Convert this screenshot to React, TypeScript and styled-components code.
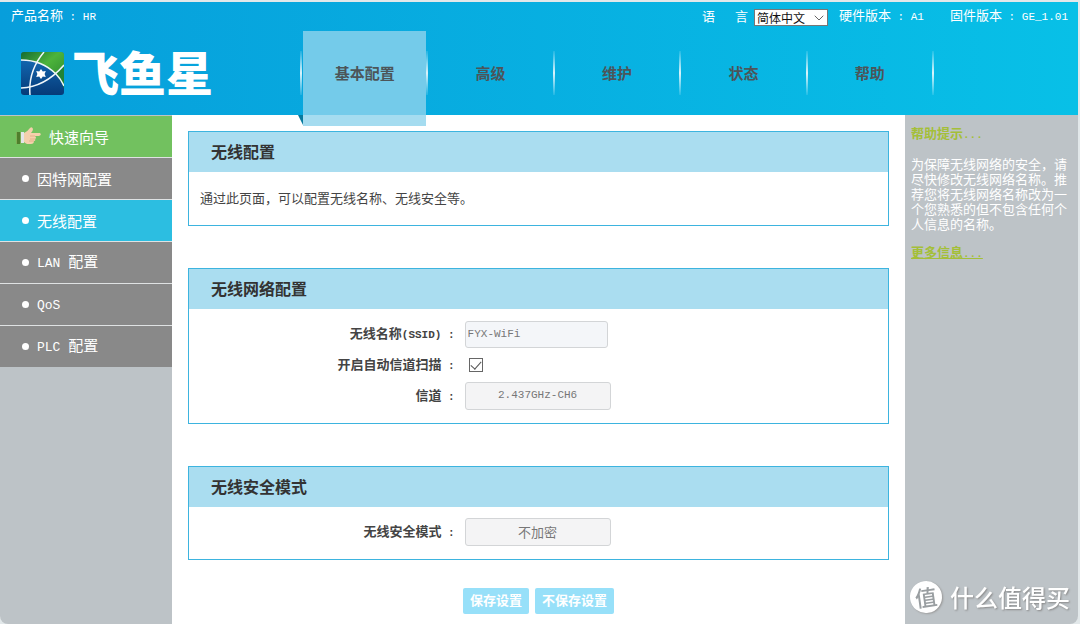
import React from "react";
import styled, { createGlobalStyle, css } from "styled-components";
import { ChevronDown } from "lucide-react";

const GlobalStyle = createGlobalStyle`
  * { box-sizing: border-box; }
  body {
    margin: 0;
    background: #e2e8ea;
    color: #444;
    font-family: "Noto Sans CJK SC", sans-serif;
    font-size: 13px;
    line-height: 15px;
  }
  h2, p, ul { margin: 0; padding: 0; }
  ul { list-style: none; }
  a { color: inherit; text-decoration: none; }
`;

const Page = styled.div`
  display: flex;
  flex-direction: column;
  min-height: 100vh;
  padding: 2px 2px 0 0;
`;

const Header = styled.header`
  position: relative;
  z-index: 1;
  display: flex;
  flex-direction: column;
  background: linear-gradient(to right, #079edb, #08c0e7);
`;

const TopBar = styled.div`
  display: flex;
  align-items: center;
  height: 29px;
  padding: 0 10px 2px 11px;
  color: #fff;
`;

const LanguageLabel = styled.label`
  display: flex;
  gap: 20px;
  margin-left: auto;
  margin-right: 6px;
`;

const SelectWrap = styled.span`
  position: relative;
  display: flex;
  margin-top: 4px;
  margin-right: 11px;
  color: #666;

  svg {
    position: absolute;
    right: 1px;
    top: 1px;
    pointer-events: none;
  }
`;

const LanguageSelect = styled.select`
  appearance: none;
  width: 74px;
  height: 17px;
  padding: 0 0 0 2px;
  border: 1px solid #777;
  border-radius: 0;
  background: #fff;
  color: #111;
  font: 12px/15px "Noto Sans CJK SC", sans-serif;
`;

const Version = styled.span`
  & + & { margin-left: 26px; }
`;

const Latin = styled.span<{ $large?: boolean }>`
  font-family: "Liberation Mono", monospace;
  font-size: ${(p) => (p.$large ? 13 : 11)}px;
  white-space: pre;
`;

const Banner = styled.div`
  display: flex;
  height: 84px;
`;

const Logo = styled.a`
  display: flex;
  align-items: center;
  flex: 0 0 300px;
  gap: 8px;
  padding-left: 21px;
`;

const LogoName = styled.span`
  padding-bottom: 4px;
  color: #fff;
  font-size: 47px;
  font-weight: 900;
  line-height: 48px;
`;

const rule = css`
  content: "";
  width: 2px;
  height: 44px;
  background: linear-gradient(rgba(255, 255, 255, 0.1), rgba(255, 255, 255, 0.85), rgba(255, 255, 255, 0.1));
`;

const Nav = styled.nav`
  display: flex;
  flex: 1;
  align-items: center;
  margin-right: 144px;

  &::before { ${rule} }
`;

const NavItem = styled.div`
  display: flex;
  flex: 1;
  align-items: center;
  align-self: stretch;

  &::after { ${rule} }
`;

const NavLink = styled.a<{ $active?: boolean }>`
  position: relative;
  flex: 1;
  align-self: stretch;
  color: #4c5559;
  font-size: 15px;
  font-weight: bold;
  line-height: 84px;
  text-align: center;

  ${(p) =>
    p.$active &&
    css`
      margin: 0 0 -11px 1px;
      background: linear-gradient(#74cbea 84px, #a5dcf0 84px);

      &::before {
        content: "";
        position: absolute;
        left: -5px;
        bottom: 1px;
        border-top: 10px solid #067a9e;
        border-left: 5px solid transparent;
      }
    `}
`;

const Body = styled.div`
  display: flex;
  flex: 1;
  background: #fff;
  border-radius: 0 0 10px 10px;
`;

const Sidebar = styled.aside`
  flex: 0 0 172px;
  padding-top: 1px;
  background: #bdc3c7;
  border-bottom-left-radius: 8px;
`;

const Menu = styled.ul`
  display: flex;
  flex-direction: column;
  gap: 1px;
  background: #dfe2e3;
`;

const tones = { wizard: "#72c15f", normal: "#898989", active: "#2cbee1" };

const MenuLink = styled.a<{ $tone: keyof typeof tones }>`
  display: flex;
  align-items: center;
  gap: 8px;
  height: 41px;
  padding-bottom: 1px;
  padding-left: ${(p) => (p.$tone === "wizard" ? 16 : 22)}px;
  background: ${(p) => tones[p.$tone]};
  color: #fff;
  font-size: 15px;
`;

const Dot = styled.span`
  width: 7px;
  height: 7px;
  border-radius: 50%;
  background: #fff;
`;

const Main = styled.main`
  display: flex;
  flex: 1;
  flex-direction: column;
  padding: 16px 16px 10px;
`;

const Panel = styled.section`
  margin-bottom: 42px;
  border: 1px solid #3db4df;

  &:last-of-type { margin-bottom: 28px; }
`;

const PanelTitle = styled.h2`
  padding: 0 22px 2px;
  background: #aaddf0;
  color: #333;
  font-size: 16px;
  line-height: 38px;
`;

const Description = styled.p`
  padding: 18px 11px 20px;
`;

const Fields = styled.div`
  display: flex;
  flex-direction: column;
  gap: 3px;
  padding: 11px 0 13px;
`;

const Row = styled.div`
  display: grid;
  grid-template-columns: 38% 1fr;
  align-items: center;
  column-gap: 10px;
  min-height: 28px;
`;

const RowLabel = styled.label`
  color: #444;
  font-weight: bold;
  text-align: right;
`;

const control = css`
  border: 1px solid #d3d5d7;
  border-radius: 3px;
  color: #777;
`;

const TextInput = styled.input`
  ${control}
  width: 143px;
  height: 27px;
  padding: 0 2px;
  background: #f4f6f9;
  font: 11px "Liberation Mono", monospace;
`;

const Dropdown = styled.select<{ $latin?: boolean }>`
  ${control}
  appearance: none;
  width: 146px;
  height: 28px;
  padding: 0 0 2px;
  background: #f4f4f5;
  font: ${(p) => (p.$latin ? '11px "Liberation Mono", monospace' : '13px "Noto Sans CJK SC", sans-serif')};
  text-align-last: center;
`;

const Checkbox = styled.input`
  appearance: none;
  display: flex;
  justify-content: center;
  width: 14px;
  height: 14px;
  margin: 0 0 0 4px;
  border: 1px solid #666;
  background: #fff;

  &:checked::after {
    content: "";
    width: 5px;
    height: 9px;
    border: solid #555;
    border-width: 0 1px 1px 0;
    transform: rotate(42deg);
  }
`;

const Actions = styled.div`
  display: flex;
  justify-content: center;
  gap: 6px;
`;

const Action = styled.button`
  height: 26px;
  padding: 0 7px 2px;
  border: 0;
  border-radius: 2px;
  background: #97e0f9;
  color: #fff;
  font: bold 13px/24px "Noto Sans CJK SC", sans-serif;
`;

const Help = styled.aside`
  display: flex;
  flex: 0 0 173px;
  flex-direction: column;
  align-items: flex-start;
  gap: 13px;
  padding: 10px 11px 0 6px;
  background: #bdc3c7;
  border-bottom-right-radius: 8px;
  color: #fff;
`;

const HelpTitle = styled.h2`
  color: #a4bf38;
  font-size: 13px;
  line-height: 15px;
`;

const HelpLink = styled.a`
  color: #a4bf38;
  font-weight: bold;
  text-decoration: underline;
`;

const Watermark = styled.div`
  position: fixed;
  right: 10px;
  bottom: 11px;
  display: flex;
  align-items: center;
  gap: 8px;
  color: #fff;
  font-size: 24px;
  font-weight: 500;
  line-height: 32px;
  text-shadow: 1px 1px 2px #888;
`;

const Badge = styled.span`
  width: 32px;
  height: 32px;
  border-radius: 50%;
  background: #fff;
  box-shadow: 1px 1px 2px #999;
  color: #999ea1;
  font-size: 22px;
  line-height: 30px;
  text-align: center;
  text-shadow: none;
  transform: rotate(-8deg);
`;

const LogoMark = () => (
  <svg width="43" height="43" viewBox="0 0 43 43" aria-hidden="true">
    <defs>
      <linearGradient id="sea" x1="0" y1="0" x2="0" y2="1">
        <stop offset="0" stopColor="#1670bb" />
        <stop offset="1" stopColor="#053a78" />
      </linearGradient>
      <linearGradient id="land" x1="0" y1="0" x2="1" y2="1">
        <stop offset="0" stopColor="#176b31" />
        <stop offset="0.45" stopColor="#4db43b" />
        <stop offset="1" stopColor="#25802d" />
      </linearGradient>
      <clipPath id="tile"><rect width="43" height="43" rx="3" /></clipPath>
    </defs>
    <g clipPath="url(#tile)">
      <rect width="43" height="43" fill="url(#sea)" />
      <path d="M0 0H43V36Q40 27 34 22Q19 8 0 8Z" fill="url(#land)" />
      <path d="M34 22L43 13V36Q40 28 34 22Z" fill="#218334" />
      <g fill="none" stroke="#eef5fa" strokeWidth="1.5">
        <path d="M0 8Q21 8 35 22Q40 27 43 34" />
        <path d="M0 36Q24 35 43 13" />
        <path d="M23 0Q7 19 9 43" />
      </g>
      <path d="M20 17l1.8 2.5 3-.4-1.2 2.9 1.2 2.9-3-.4L20 27l-1.8-2.5-3 .4 1.2-2.9-1.2-2.9 3 .4Z" fill="#fff" />
    </g>
  </svg>
);

const Hand = () => (
  <svg width="25" height="18" viewBox="0 0 25 18" aria-hidden="true">
    <path d="M0 5H5V17H0Z" fill="#7fae55" />
    <path d="M1 5H4V17H1Z" fill="#4f7f2c" />
    <path d="M5 5H8V16H5Z" fill="#e3e6e8" />
    <path d="M8 6Q12 4 14 1Q16-1 17 2Q17 4 15 6H24Q26 8 23 9L19 9Q21 11 19 12Q20 14 18 14Q18 17 15 17H11Q9 16 8 15Z" fill="#f5d0ac" />
    <path d="M14 9H19M14 12H19M13 14H18" fill="none" stroke="#dfab82" strokeWidth="0.8" />
  </svg>
);

const navItems = ["基本配置", "高级", "维护", "状态", "帮助"];

const menuItems: { latin?: string; text: string; active?: boolean }[] = [
  { text: "因特网配置" },
  { text: "无线配置", active: true },
  { latin: "LAN ", text: "配置" },
  { latin: "QoS", text: "" },
  { latin: "PLC ", text: "配置" },
];

export default function App() {
  return (
    <>
      <GlobalStyle />
      <Page>
        <Header>
          <TopBar>
            <span>产品名称<Latin> : HR</Latin></span>
            <LanguageLabel htmlFor="language"><span>语</span><span>言</span></LanguageLabel>
            <SelectWrap>
              <LanguageSelect id="language">
                <option>简体中文</option>
              </LanguageSelect>
              <ChevronDown size={16} strokeWidth={1.5} />
            </SelectWrap>
            <Version>硬件版本<Latin> : A1</Latin></Version>
            <Version>固件版本<Latin> : GE_1.01</Latin></Version>
          </TopBar>
          <Banner>
            <Logo href="#"><LogoMark /><LogoName>飞鱼星</LogoName></Logo>
            <Nav>
              {navItems.map((item, i) => (
                <NavItem key={item}>
                  <NavLink href="#" $active={i === 0}>{item}</NavLink>
                </NavItem>
              ))}
            </Nav>
          </Banner>
        </Header>
        <Body>
          <Sidebar>
            <Menu>
              <li><MenuLink href="#" $tone="wizard"><Hand />快速向导</MenuLink></li>
              {menuItems.map((item, i) => (
                <li key={i}>
                  <MenuLink href="#" $tone={item.active ? "active" : "normal"}>
                    <Dot />
                    <span>{item.latin && <Latin $large>{item.latin}</Latin>}{item.text}</span>
                  </MenuLink>
                </li>
              ))}
            </Menu>
          </Sidebar>
          <Main>
            <Panel>
              <PanelTitle>无线配置</PanelTitle>
              <Description>通过此页面，可以配置无线名称、无线安全等。</Description>
            </Panel>
            <Panel>
              <PanelTitle>无线网络配置</PanelTitle>
              <Fields>
                <Row>
                  <RowLabel htmlFor="ssid">无线名称<Latin>(SSID) :</Latin></RowLabel>
                  <TextInput id="ssid" defaultValue="FYX-WiFi" />
                </Row>
                <Row>
                  <RowLabel htmlFor="scan">开启自动信道扫描<Latin> :</Latin></RowLabel>
                  <Checkbox id="scan" type="checkbox" defaultChecked />
                </Row>
                <Row>
                  <RowLabel htmlFor="channel">信道<Latin> :</Latin></RowLabel>
                  <Dropdown id="channel" $latin><option>2.437GHz-CH6</option></Dropdown>
                </Row>
              </Fields>
            </Panel>
            <Panel>
              <PanelTitle>无线安全模式</PanelTitle>
              <Fields>
                <Row>
                  <RowLabel htmlFor="security">无线安全模式<Latin> :</Latin></RowLabel>
                  <Dropdown id="security"><option>不加密</option></Dropdown>
                </Row>
              </Fields>
            </Panel>
            <Actions>
              <Action type="button">保存设置</Action>
              <Action type="button">不保存设置</Action>
            </Actions>
          </Main>
          <Help>
            <HelpTitle>帮助提示<Latin>...</Latin></HelpTitle>
            <p>为保障无线网络的安全，请尽快修改无线网络名称。推荐您将无线网络名称改为一个您熟悉的但不包含任何个人信息的名称。</p>
            <HelpLink href="#">更多信息<Latin>...</Latin></HelpLink>
          </Help>
        </Body>
      </Page>
      <Watermark><Badge>值</Badge>什么值得买</Watermark>
    </>
  );
}
